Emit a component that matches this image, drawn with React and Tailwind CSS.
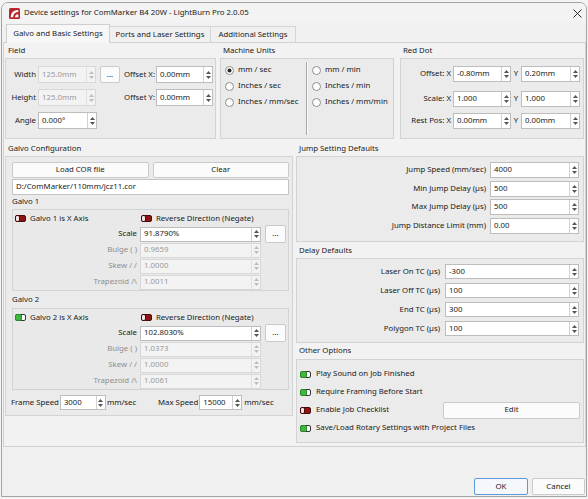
import React from "react";

function Arrows({ disabled }) {
  const c = disabled ? "#bdbdbd" : "#555555";
  return (
    <div
      className={`flex w-[9px] shrink-0 flex-col items-center justify-center gap-[2px] border-l ${
        disabled ? "border-[#e0e0e0]" : "border-[#d2d2d2]"
      }`}
    >
      <svg width="5" height="3" viewBox="0 0 5 3">
        <path d="M0 3L2.5 0L5 3Z" fill={c} />
      </svg>
      <svg width="5" height="3" viewBox="0 0 5 3">
        <path d="M0 0L2.5 3L5 0Z" fill={c} />
      </svg>
    </div>
  );
}

function Spin({ value, className = "", disabled = false }) {
  return (
    <div
      className={`flex shrink-0 items-stretch border ${
        disabled
          ? "border-[#d8d8d8] bg-[#f3f3f3] text-[#9a9a9a]"
          : "border-[#bdbdbd] bg-white text-[#1a1a1a]"
      } ${className}`}
    >
      <div className="flex min-w-0 flex-1 items-center overflow-hidden whitespace-nowrap pl-[3px]">
        {value}
      </div>
      <Arrows disabled={disabled} />
    </div>
  );
}

function Btn({ children, className = "" }) {
  return (
    <button
      type="button"
      className={`flex shrink-0 items-center justify-center rounded-[2px] border border-[#cacaca] bg-[#fbfbfb] text-[#1a1a1a] ${className}`}
    >
      {children}
    </button>
  );
}

function Toggle({ on }) {
  if (on) {
    return (
      <svg width="11" height="7" viewBox="0 0 11 7" className="shrink-0">
        <rect x="0.5" y="0.5" width="10" height="6" rx="1.5" fill="#ffffff" stroke="#333333" />
        <rect x="0.5" y="0.5" width="6" height="6" rx="1.5" fill="#3fb83f" stroke="#2c8a2c" />
      </svg>
    );
  }
  return (
    <svg width="11" height="7" viewBox="0 0 11 7" className="shrink-0">
      <rect x="0.5" y="0.5" width="10" height="6" rx="1.5" fill="#8e1414" stroke="#4a0808" />
      <rect x="0.5" y="0.5" width="4" height="6" rx="1.5" fill="#f4e4e4" stroke="#4a0808" />
    </svg>
  );
}

function Radio({ checked }) {
  return (
    <svg width="9" height="9" viewBox="0 0 9 9" className="shrink-0">
      <circle cx="4.5" cy="4.5" r="4" fill="#ffffff" stroke="#8c8c8c" />
      {checked && <circle cx="4.5" cy="4.5" r="2" fill="#222222" />}
    </svg>
  );
}

function Logo() {
  return (
    <svg width="11" height="11" viewBox="0 0 11 11" className="shrink-0">
      <rect width="11" height="11" rx="1.5" fill="#b8282e" />
      <path d="M1.8 9.3C1.8 5 4.6 2.1 9.3 2.1L9.3 4.1C6.3 4.1 4.3 6 4.1 9.3Z" fill="#ffffff" />
      <path d="M6 9.3C6 7.6 7.3 6.3 9.3 6.3L9.3 9.3Z" fill="#ffffff" />
    </svg>
  );
}

function Group({ title, className = "", titleClass = "h-[15px]", frameClass = "", children }) {
  return (
    <div className={`flex shrink-0 flex-col ${className}`}>
      <div className={`flex shrink-0 items-center pl-[3px] ${titleClass}`}>{title}</div>
      <div className={`border border-[#d3d3d3] bg-[#ebebeb] ${frameClass}`}>{children}</div>
    </div>
  );
}

function RadioRow({ checked, label }) {
  return (
    <div className="flex h-[16px] items-center gap-[4px]">
      <Radio checked={checked} />
      <span>{label}</span>
    </div>
  );
}

function RedRow({ label, x, y, className = "" }) {
  return (
    <div className={`flex h-[16px] items-center ${className}`}>
      <span className="w-[50px] text-right">{label}</span>
      <Spin className="ml-[2px] h-[16px] w-[58px]" value={x} />
      <span className="w-[10px] text-center">Y</span>
      <Spin className="h-[16px] w-[59px]" value={y} />
    </div>
  );
}

function GalvoBlock({ n, xAxis, scale, bulge, skew, trap }) {
  return (
    <div className="flex h-[82px] flex-col border border-[#d3d3d3] bg-[#e9e9e9] pt-[2px]">
      <div className="flex h-[14px] items-center">
        <div className="flex w-[128px] items-center gap-[4px] pl-[2px]">
          <Toggle on={xAxis} />
          <span>{`Galvo ${n} is X Axis`}</span>
        </div>
        <div className="flex items-center gap-[4px]">
          <Toggle on={false} />
          <span>Reverse Direction (Negate)</span>
        </div>
      </div>
      <div className="flex h-[16px] items-center">
        <span className="w-[124px] text-right">Scale</span>
        <Spin className="ml-[3px] h-[15px] w-[121px]" value={scale} />
        <Btn className="ml-[4px] h-[18px] w-[21px]">...</Btn>
      </div>
      <div className="flex h-[16px] items-center">
        <span className="w-[124px] text-right text-[#8f8f8f]">Bulge ( )</span>
        <Spin className="ml-[3px] h-[15px] w-[121px]" value={bulge} disabled />
      </div>
      <div className="flex h-[16px] items-center">
        <span className="w-[124px] text-right text-[#8f8f8f]">Skew / /</span>
        <Spin className="ml-[3px] h-[15px] w-[121px]" value={skew} disabled />
      </div>
      <div className="flex h-[16px] items-center">
        <span className="w-[124px] text-right text-[#8f8f8f]">{"Trapezoid /\\"}</span>
        <Spin className="ml-[3px] h-[15px] w-[121px]" value={trap} disabled />
      </div>
    </div>
  );
}

function ValueRow({ label, value, inputClass, h = "h-[16px]" }) {
  return (
    <div className={`flex items-center justify-end pr-[4px] ${h}`}>
      <span className="whitespace-nowrap">{label}</span>
      <Spin className={`h-full ${inputClass}`} value={value} />
    </div>
  );
}

function OptionRow({ on, label, children }) {
  return (
    <div className="flex h-[18px] items-center gap-[5px] pl-[3px] pr-[3px]">
      <Toggle on={on} />
      <span>{label}</span>
      {children}
    </div>
  );
}

export default function App() {
  return (
    <div className="h-[499px] w-[588px] overflow-hidden bg-[#f4f4f4] pl-[1px] pt-[2px] font-['Noto_Sans',sans-serif] text-[7.8px] leading-none text-[#1a1a1a]">
      <div className="flex h-[495px] w-[586px] flex-col overflow-hidden rounded-t-[7px] border border-[#a3a3a3] bg-[#f0f0f0]">
        {/* title bar */}
        <div className="flex h-[20px] shrink-0 items-center bg-[#f3f3f3] pl-[7px] pr-[4px]">
          <Logo />
          <span className="ml-[4px]">Device settings for ComMarker B4 20W - LightBurn Pro 2.0.05</span>
          <svg className="ml-auto" width="9" height="9" viewBox="0 0 9 9">
            <path d="M0.5 0.5L8.5 8.5M8.5 0.5L0.5 8.5" stroke="#2a2a2a" strokeWidth="1" />
          </svg>
        </div>

        {/* tabs */}
        <div className="relative z-10 flex h-[19px] shrink-0 items-end pl-[4px]">
          <div className="-mb-px flex h-[19px] w-[104px] items-center justify-center border border-b-0 border-[#cfcfcf] bg-[#f7f7f7]">
            Galvo and Basic Settings
          </div>
          <div className="flex h-[16px] w-[101px] items-center justify-center border-r border-t border-[#d6d6d6] bg-[#f0f0f0]">
            Ports and Laser Settings
          </div>
          <div className="flex h-[16px] w-[85px] items-center justify-center border-r border-t border-[#d6d6d6] bg-[#f0f0f0]">
            Additional Settings
          </div>
        </div>

        {/* tab pane */}
        <div className="ml-px flex h-[405px] shrink-0 flex-col border border-[#d2d2d2] bg-[#f2f2f2] px-px">
          {/* top row */}
          <div className="flex">
            <Group title="Field" className="w-[211px]" frameClass="flex h-[81px] flex-col gap-[6px] pt-[7px]">
              <div className="flex h-[17px] items-center">
                <span className="w-[30px] text-right">Width</span>
                <Spin className="ml-[2px] h-[17px] w-[58px]" value="125.0mm" disabled />
                <Btn className="ml-[4px] h-[17px] w-[20px]">...</Btn>
                <span className="w-[35px] text-right">Offset X:</span>
                <Spin className="ml-[1px] h-[17px] w-[57px]" value="0.00mm" />
              </div>
              <div className="flex h-[17px] items-center">
                <span className="w-[30px] text-right">Height</span>
                <Spin className="ml-[2px] h-[17px] w-[58px]" value="125.0mm" disabled />
                <span className="w-[59px] text-right">Offset Y:</span>
                <Spin className="ml-[1px] h-[17px] w-[57px]" value="0.00mm" />
              </div>
              <div className="flex h-[17px] items-center">
                <span className="w-[30px] text-right">Angle</span>
                <Spin className="ml-[2px] h-[17px] w-[59px]" value="0.000°" />
              </div>
            </Group>

            <Group title="Machine Units" className="ml-[4px] w-[174px]" frameClass="flex h-[81px]">
              <div className="flex w-[85px] flex-col pl-[4px] pt-[3px]">
                <RadioRow checked label="mm / sec" />
                <RadioRow label="Inches / sec" />
                <RadioRow label="Inches / mm/sec" />
              </div>
              <div className="my-[3px] w-[2px] border-l border-r border-l-[#a8a8a8] border-r-[#fafafa]" />
              <div className="flex flex-1 flex-col pl-[4px] pt-[3px]">
                <RadioRow label="mm / min" />
                <RadioRow label="Inches / min" />
                <RadioRow label="Inches / mm/min" />
              </div>
            </Group>

            <Group title="Red Dot" className="ml-[6px] w-[184px]" frameClass="flex h-[81px] flex-col pt-[7px]">
              <RedRow label="Offset: X" x="-0.80mm" y="0.20mm" />
              <RedRow label="Scale: X" x="1.000" y="1.000" className="mt-[9px]" />
              <RedRow label="Rest Pos: X" x="0.00mm" y="0.00mm" className="mt-[6px]" />
            </Group>
          </div>

          {/* lower area */}
          <div className="mt-[2px] flex gap-[3px]">
            <Group title="Galvo Configuration" className="w-[288px]" frameClass="flex h-[260px] flex-col pl-[6px] pr-[3px] pt-[5px]">
              <div className="flex gap-[4px]">
                <Btn className="h-[16px] flex-1">Load COR file</Btn>
                <Btn className="h-[16px] flex-1">Clear</Btn>
              </div>
              <div className="mt-[1px] flex h-[16px] items-center border border-[#c4c4c4] bg-white pl-[3px]">
                D:/ComMarker/110mm/jcz11.cor
              </div>
              <div className="flex h-[14px] items-center">Galvo 1</div>
              <GalvoBlock n={1} xAxis={false} scale="91.8790%" bulge="0.9659" skew="1.0000" trap="1.0011" />
              <div className="flex h-[17px] items-center">Galvo 2</div>
              <GalvoBlock n={2} xAxis scale="102.8030%" bulge="1.0373" skew="1.0000" trap="1.0061" />
              <div className="-ml-px mt-[5px] flex h-[15px] items-center whitespace-nowrap">
                <div className="flex w-[147px] shrink-0 items-center">
                  <span>Frame Speed</span>
                  <Spin className="ml-[1px] h-[15px] w-[46px]" value="3000" />
                  <span className="pl-[1px]">mm/sec</span>
                </div>
                <span>Max Speed</span>
                <Spin className="ml-[1px] h-[15px] w-[43px]" value="15000" />
                <span className="pl-[2px]">mm/sec</span>
              </div>
            </Group>

            <div className="flex w-[288px] flex-col">
              <Group title="Jump Setting Defaults" frameClass="flex h-[86px] flex-col gap-[2.5px] pt-[5px]">
                <ValueRow label="Jump Speed (mm/sec)" value="4000" inputClass="ml-[4px] w-[89px]" />
                <ValueRow label="Min Jump Delay (µs)" value="500" inputClass="ml-[4px] w-[89px]" />
                <ValueRow label="Max Jump Delay (µs)" value="500" inputClass="ml-[4px] w-[89px]" />
                <ValueRow label="Jump Distance Limit (mm)" value="0.00" inputClass="ml-[4px] w-[89px]" />
              </Group>
              <Group title="Delay Defaults" className="mt-[1px]" frameClass="flex h-[85px] flex-col gap-[4px] pt-[5px]">
                <ValueRow label="Laser On TC (µs)" value="-300" h="h-[15px]" inputClass="ml-[5px] w-[134px]" />
                <ValueRow label="Laser Off TC (µs)" value="100" h="h-[15px]" inputClass="ml-[5px] w-[134px]" />
                <ValueRow label="End TC (µs)" value="300" h="h-[15px]" inputClass="ml-[5px] w-[134px]" />
                <ValueRow label="Polygon TC (µs)" value="100" h="h-[15px]" inputClass="ml-[5px] w-[134px]" />
              </Group>
              <Group title="Other Options" titleClass="h-[16px]" frameClass="flex h-[84px] flex-col pt-[5px]">
                <OptionRow on label="Play Sound on Job Finished" />
                <OptionRow on label="Require Framing Before Start" />
                <OptionRow on={false} label="Enable Job Checklist">
                  <Btn className="ml-auto h-[17px] w-[137px]">Edit</Btn>
                </OptionRow>
                <OptionRow on label="Save/Load Rotary Settings with Project Files" />
              </Group>
            </div>
          </div>
        </div>

        {/* dialog buttons */}
        <div className="flex flex-1 items-end justify-end gap-[4px] pb-px pr-px">
          <button
            type="button"
            className="flex h-[17px] w-[54px] items-center justify-center rounded-[2px] border border-[#5d9bd8] bg-[#f4f8fc]"
          >
            OK
          </button>
          <button
            type="button"
            className="flex h-[17px] w-[53px] items-center justify-center rounded-[2px] border border-[#cacaca] bg-[#fbfbfb]"
          >
            Cancel
          </button>
        </div>
      </div>
    </div>
  );
}
